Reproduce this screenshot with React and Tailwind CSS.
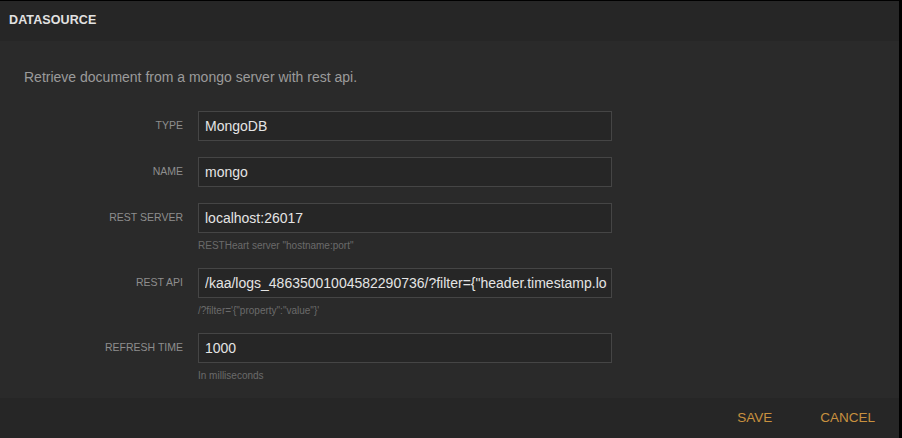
import React from "react";

const font = { fontFamily: '"Liberation Sans", Arial, sans-serif' };

function Field({ label, value, help }) {
  return (
    <div className={help ? "mb-[15px]" : "mb-[16px]"}>
      <div className="flex items-center">
        <div className="w-[183px] text-right text-[10.5px] uppercase text-[#8e8e8e] leading-none">{label}</div>
        <input
          readOnly
          value={value}
          className="ml-[15px] w-[414px] h-[30px] border border-[#454545] bg-[#262626] pl-[6px] pr-1 text-[14px] text-[#e4e4e4] outline-none"
          style={font}
        />
      </div>
      {help && (
        <div className="ml-[198px] mt-[6px] h-[14px] text-[10px] leading-[14px] text-[#6b6b6b]">{help}</div>
      )}
    </div>
  );
}

export default function App() {
  return (
    <div className="w-[902px] h-[438px] flex bg-black overflow-hidden" style={font}>
      <div className="flex-1 flex flex-col mt-[1px] bg-[#2a2a2a]">
        <div className="h-[40px] flex items-center px-[9px] bg-[#262626]">
          <span className="text-[12.5px] font-bold text-[#e2e2e2] tracking-[0.1px]">DATASOURCE</span>
        </div>
        <div className="flex-1">
          <p className="mt-[26px] ml-[24px] text-[14px] leading-[20px] text-[#9b9b9b]">
            Retrieve document from a mongo server with rest api.
          </p>
          <div className="mt-[24px]">
            <Field label="Type" value="MongoDB" />
            <Field label="Name" value="mongo" />
            <Field label="Rest Server" value="localhost:26017" help={'RESTHeart server "hostname:port"'} />
            <Field
              label="Rest API"
              value={'/kaa/logs_48635001004582290736/?filter={"header.timestamp.long":{"$gt":0}}'}
              help={`/?filter='{"property":"value"}'`}
            />
            <Field label="Refresh Time" value="1000" help="In milliseconds" />
          </div>
        </div>
        <div className="h-[41px] flex items-center justify-end gap-[48px] pr-[24px] bg-[#262626]">
          <button className="text-[13.5px] text-[#c8913f] leading-none">SAVE</button>
          <button className="text-[13.5px] text-[#c8913f] leading-none">CANCEL</button>
        </div>
      </div>
      <div className="w-[3px]" />
    </div>
  );
}
